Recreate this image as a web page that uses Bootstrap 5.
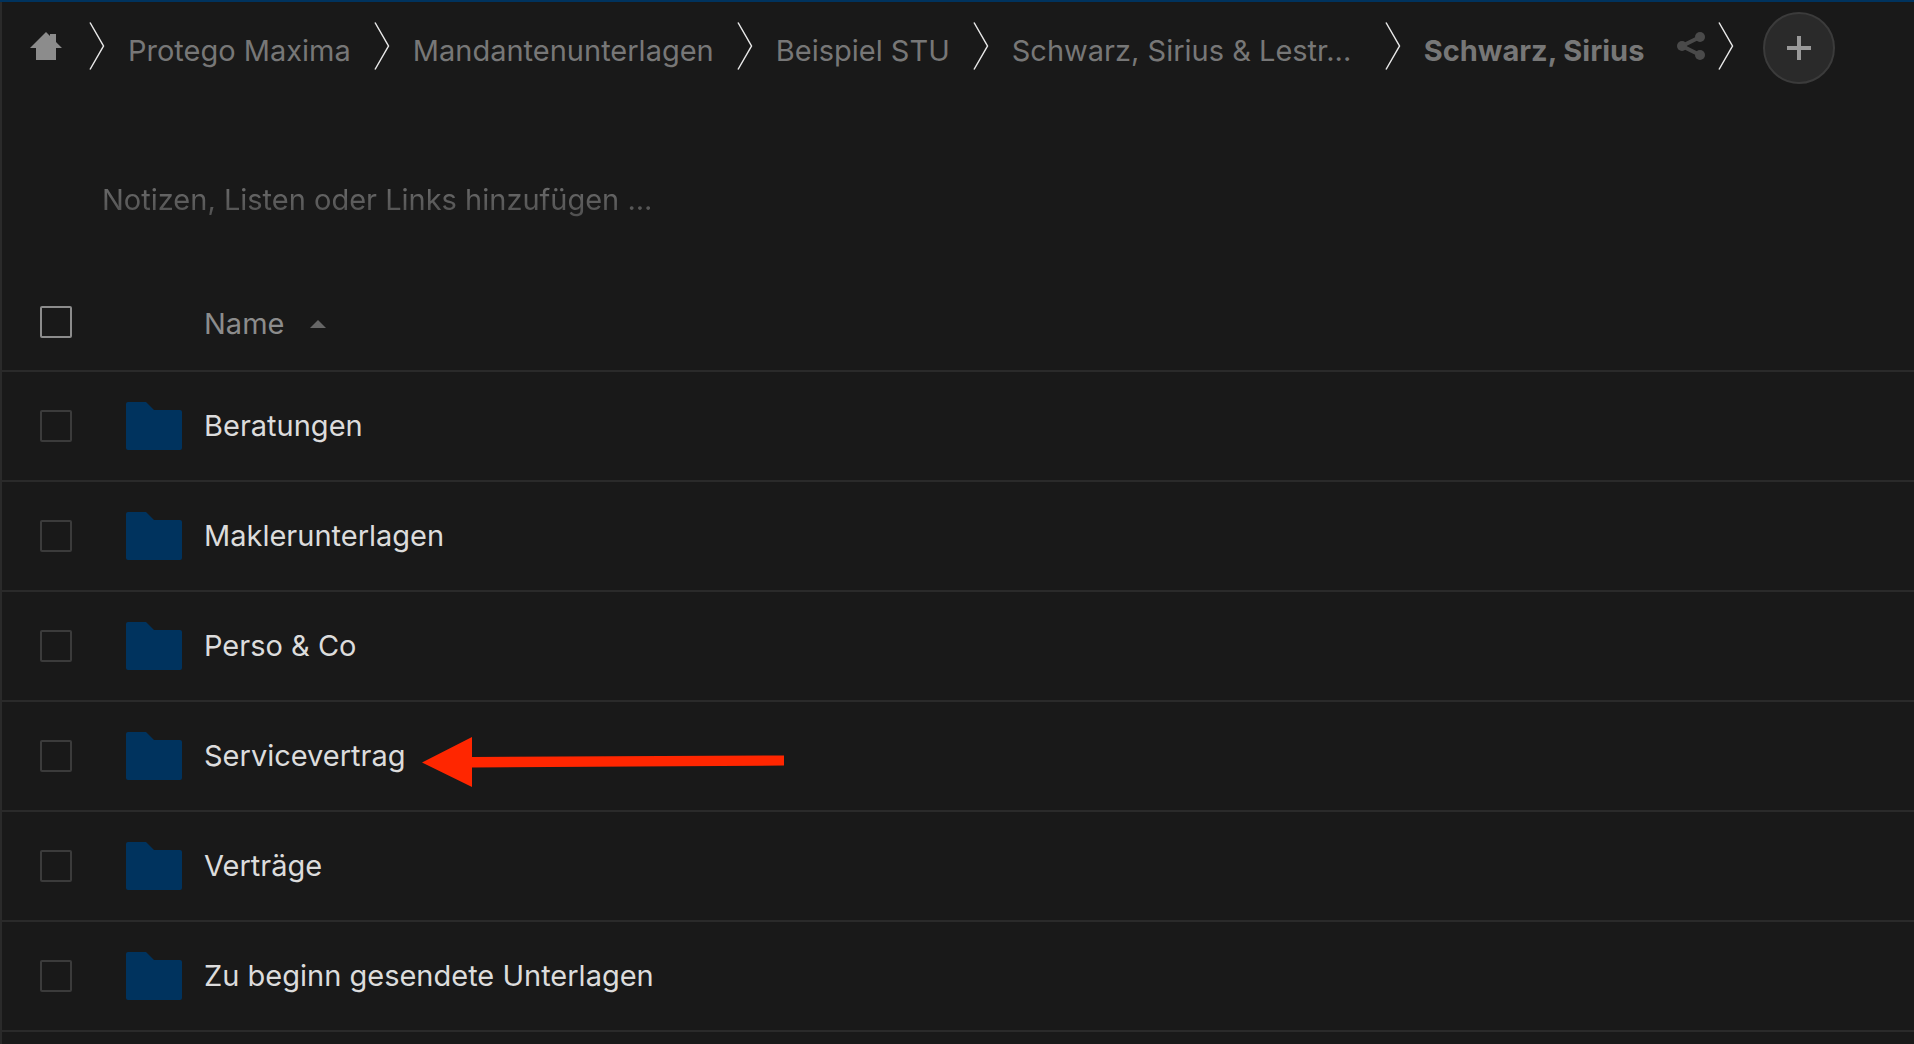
<!DOCTYPE html>
<html lang="de" data-bs-theme="dark">
<head>
<meta charset="utf-8">
<meta name="viewport" content="width=device-width, initial-scale=1">
<title>Schwarz, Sirius</title>
<link rel="stylesheet" href="https://cdn.jsdelivr.net/npm/bootstrap@5.3.0/dist/css/bootstrap.min.css">
<style>
  body { background: #191919; color: #dcdcdc; font-family: Inter, "Liberation Sans", sans-serif; font-size: 29px; line-height: 40px; }
  .app-shell { border-top: 2px solid #00335e; }
  .app-main { border-left: 2px solid #2a2a2a; }
  .path-bar { height: 94px; padding-left: 28px; padding-bottom: 2px; }
  .path-list { gap: 23px; padding-bottom: 4px; }
  .path-list a { color: #777; text-decoration: none; padding-top: 10px; }
  .path-list .home-link { padding: 0 4px 0 0; }
  .path-list .long-name { width: 350px; }
  .path-list svg, .file-table svg { display: block; flex: none; }
  .share-btn { padding: 0; border: 0; background: none; margin: 0 -10px 0 10px; }
  .add-btn { width: 72px; height: 72px; margin-left: 29px; border: 2px solid #3b3b3b; background: #2a2a2a; padding: 0; }
  .notes-wrap { padding: 84px 100px 54px; }
  .notes-input { display: block; width: 100%; height: 40px; border: 0; padding: 0; outline: 0; background: none; color: #dcdcdc; line-height: 40px; -webkit-mask-image: linear-gradient(#000, rgba(0, 0, 0, .6)); mask-image: linear-gradient(#000, rgba(0, 0, 0, .6)); }
  .notes-input::placeholder { color: #707070; opacity: 1; }
  .file-table { width: 100%; border-collapse: collapse; table-layout: fixed; }
  .file-table tr { border-bottom: 2px solid #2a2a2a; height: 110px; }
  .file-table thead tr { height: 97px; }
  .file-table th, .file-table td { padding: 0; font-weight: 400; vertical-align: middle; }
  .col-check { width: 124px; }
  .col-icon { width: 78px; }
  .pick { display: block; appearance: none; width: 32px; height: 32px; margin: 0 0 0 38px; border: 2px solid #3b3b3b; border-radius: 2px; background: none; }
  .pick-all { border-color: #8c8c8c; }
  .sort-btn { color: #8c8c8c; background: none; border: 0; padding: 4px 0 0; gap: 26px; }
  .file-table td a { display: table; padding-top: 2px; color: #dcdcdc; text-decoration: none; }
  .pointer { top: 1px; left: 100%; margin-left: 16px; }
</style>
<script src="https://cdn.jsdelivr.net/npm/bootstrap@5.3.0/dist/js/bootstrap.bundle.min.js"></script>
</head>
<body>
<svg class="d-none" aria-hidden="true">
  <symbol id="chevron" viewBox="0 0 16 48"><path d="M1 .5 14.500 24 1 47.500" fill="none" stroke="#e8e8e8" stroke-width="1.500"/></symbol>
  <symbol id="folder" viewBox="0 0 56 48"><path d="M2 0H20L28 8H54a2 2 0 0 1 2 2V46a2 2 0 0 1-2 2H2a2 2 0 0 1-2-2V2a2 2 0 0 1 2-2Z" fill="#00335e"/></symbol>
</svg>
<div class="app-shell d-flex flex-column min-vh-100">
<main class="app-main flex-grow-1">
  <nav class="path-bar d-flex align-items-center" aria-label="Pfad">
    <div class="path-list d-flex align-items-center text-nowrap">
      <a class="home-link" href="#" aria-label="Start"><svg width="32" height="28" viewBox="0 0 32 28"><path d="M0 16 16 0l4 4V2h6v8l6 6h-6v12H6V16Z" fill="#8c8c8c"/></svg></a>
      <svg width="16" height="48"><use href="#chevron"/></svg>
      <a href="#">Protego Maxima</a>
      <svg width="16" height="48"><use href="#chevron"/></svg>
      <a href="#">Mandantenunterlagen</a>
      <svg width="16" height="48"><use href="#chevron"/></svg>
      <a href="#">Beispiel STU</a>
      <svg width="16" height="48"><use href="#chevron"/></svg>
      <a class="long-name" href="#">Schwarz, Sirius &amp; Lestr...</a>
      <svg width="16" height="48"><use href="#chevron"/></svg>
      <a class="fw-bold" href="#" aria-current="page">Schwarz, Sirius</a>
      <button class="share-btn" type="button" aria-label="Teilen"><svg width="28" height="28" viewBox="0 0 28 28" fill="#4a4a4a"><path d="M23 5 5 14l18 9" fill="none" stroke="#4a4a4a" stroke-width="4"/><circle cx="5" cy="14" r="5"/><circle cx="23" cy="5" r="5"/><circle cx="23" cy="23" r="5"/></svg></button>
      <svg width="16" height="48"><use href="#chevron"/></svg>
    </div>
    <button class="add-btn rounded-circle d-flex align-items-center justify-content-center" type="button" aria-label="Neu"><svg width="24" height="24"><path d="M12 0V24M0 12H24" stroke="#999" stroke-width="4"/></svg></button>
  </nav>
  <div class="notes-wrap"><input class="notes-input" type="text" aria-label="Notizen" placeholder="Notizen, Listen oder Links hinzufügen ..."></div>
  <table class="file-table">
    <colgroup><col class="col-check"><col class="col-icon"><col></colgroup>
    <thead><tr>
      <th><input class="pick pick-all" type="checkbox" aria-label="Alle auswählen"></th><th></th>
      <th scope="col"><button class="sort-btn d-flex align-items-center" type="button">Name <svg width="16" height="8"><path d="M0 8 8 0l8 8Z" fill="#666"/></svg></button></th>
    </tr></thead>
    <tbody>
      <tr><td><input class="pick" type="checkbox" aria-label="Beratungen auswählen"></td><td><svg width="56" height="48"><use href="#folder"/></svg></td><td><a href="#">Beratungen</a></td></tr>
      <tr><td><input class="pick" type="checkbox" aria-label="Maklerunterlagen auswählen"></td><td><svg width="56" height="48"><use href="#folder"/></svg></td><td><a href="#">Maklerunterlagen</a></td></tr>
      <tr><td><input class="pick" type="checkbox" aria-label="Perso &amp; Co auswählen"></td><td><svg width="56" height="48"><use href="#folder"/></svg></td><td><a href="#">Perso &amp; Co</a></td></tr>
      <tr><td><input class="pick" type="checkbox" aria-label="Servicevertrag auswählen"></td><td><svg width="56" height="48"><use href="#folder"/></svg></td><td><a class="position-relative" href="#">Servicevertrag<svg class="pointer position-absolute" width="362" height="50" viewBox="0 0 362 50"><path d="M0 25.500 50 0V20L362 18.500V28.500L50 30.500V50Z" fill="#ff2600"/></svg></a></td></tr>
      <tr><td><input class="pick" type="checkbox" aria-label="Verträge auswählen"></td><td><svg width="56" height="48"><use href="#folder"/></svg></td><td><a href="#">Verträge</a></td></tr>
      <tr><td><input class="pick" type="checkbox" aria-label="Zu beginn gesendete Unterlagen auswählen"></td><td><svg width="56" height="48"><use href="#folder"/></svg></td><td><a href="#">Zu beginn gesendete Unterlagen</a></td></tr>
    </tbody>
  </table>
</main>
</div>
</body>
</html>
